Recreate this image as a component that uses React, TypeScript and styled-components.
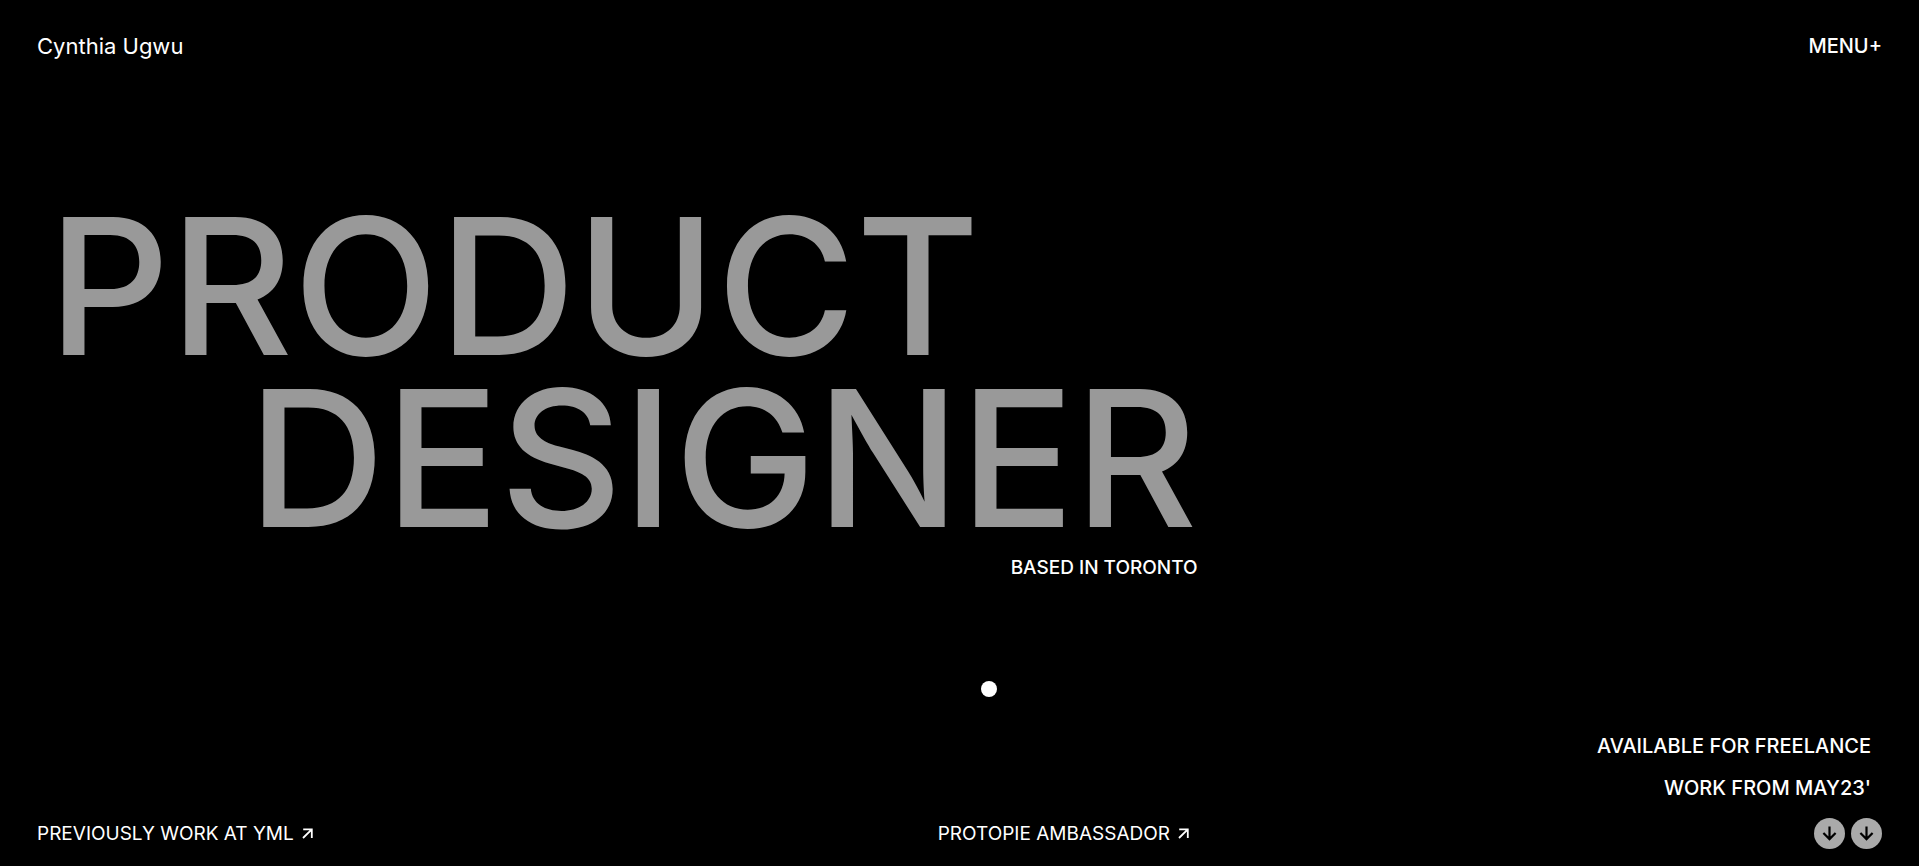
import React from "react";
import styled, { createGlobalStyle } from "styled-components";

const GlobalStyle = createGlobalStyle`
  *, *::before, *::after { box-sizing: border-box; }
  body {
    margin: 0;
    background: #000;
    color: #fff;
    font-family: Inter, "Liberation Sans", sans-serif;
  }
`;

const Page = styled.div`
  min-height: 100vh;
  display: flex;
  flex-direction: column;
  position: relative;
  overflow: hidden;
`;

const Nav = styled.header`
  display: flex;
  justify-content: space-between;
  align-items: center;
  padding: 32px 37px;
  line-height: 28px;
`;

const Brand = styled.a`
  color: inherit;
  text-decoration: none;
  font-size: 22px;
`;

const MenuButton = styled.button`
  border: 0;
  padding: 0;
  background: none;
  color: inherit;
  font: inherit;
  font-size: 20px;
  font-weight: 500;
  cursor: pointer;
`;

const Main = styled.main`
  flex: 1;
  display: flex;
  flex-direction: column;
  padding: 108px 48px 0;
`;

const Hero = styled.section`
  align-self: flex-start;
  display: flex;
  flex-direction: column;
`;

const Title = styled.h1`
  margin: 0;
  color: #999;
  font-size: 190px;
  font-weight: 500;
  line-height: 172px;
`;

const TitleLine = styled.span<{ $indent?: boolean }>`
  display: block;
  padding-left: ${(p) => (p.$indent ? "200px" : "0")};
`;

const Based = styled.p`
  margin: 12px 0 0;
  text-align: right;
  font-size: 19px;
  font-weight: 500;
  line-height: 24px;
`;

const Availability = styled.p`
  margin: auto 0 0;
  text-align: right;
  font-size: 20px;
  font-weight: 500;
  line-height: 42px;
`;

const AvailabilityLine = styled.span`
  display: block;
`;

const Footer = styled.footer`
  display: flex;
  justify-content: space-between;
  align-items: center;
  padding: 9px 37px 17px;
`;

const FooterLink = styled.a`
  display: flex;
  align-items: center;
  gap: 8px;
  color: inherit;
  text-decoration: none;
  font-size: 19px;
  line-height: 24px;
`;

const Scroll = styled.div`
  display: flex;
  gap: 6px;
`;

const RoundButton = styled.button`
  width: 31px;
  height: 31px;
  display: flex;
  align-items: center;
  justify-content: center;
  border: 0;
  border-radius: 50%;
  padding: 0;
  background: #aaa;
  color: #000;
  cursor: pointer;
`;

const Cursor = styled.div`
  position: absolute;
  top: 681px;
  left: 981px;
  width: 16px;
  height: 16px;
  border-radius: 50%;
  background: #fff;
  pointer-events: none;
`;

const ArrowOut = () => (
  <svg width="11" height="11" viewBox="0 0 11 11" fill="none" stroke="currentColor" strokeWidth="1.8" aria-hidden="true">
    <path d="M1.2 1.3H9.8V9.9M9.8 1.3L1 10" />
  </svg>
);

const ArrowDown = () => (
  <svg width="15" height="15" viewBox="0 0 15 15" fill="none" stroke="currentColor" strokeWidth="2.2" aria-hidden="true">
    <path d="M7.5 0.5V12.6M1.4 7L7.5 13.1L13.6 7" />
  </svg>
);

export default function App() {
  return (
    <Page>
      <GlobalStyle />
      <Nav>
        <Brand href="#">Cynthia Ugwu</Brand>
        <MenuButton type="button">MENU+</MenuButton>
      </Nav>
      <Main>
        <Hero>
          <Title>
            <TitleLine>PRODUCT</TitleLine>
            <TitleLine $indent>DESIGNER</TitleLine>
          </Title>
          <Based>BASED IN TORONTO</Based>
        </Hero>
        <Availability>
          <AvailabilityLine>AVAILABLE FOR FREELANCE</AvailabilityLine>
          <AvailabilityLine>WORK FROM MAY23'</AvailabilityLine>
        </Availability>
      </Main>
      <Footer>
        <FooterLink href="#yml">
          PREVIOUSLY WORK AT YML
          <ArrowOut />
        </FooterLink>
        <FooterLink href="#protopie">
          PROTOPIE AMBASSADOR
          <ArrowOut />
        </FooterLink>
        <Scroll>
          <RoundButton type="button" aria-label="Scroll down">
            <ArrowDown />
          </RoundButton>
          <RoundButton type="button" aria-label="Next section">
            <ArrowDown />
          </RoundButton>
        </Scroll>
      </Footer>
      <Cursor />
    </Page>
  );
}
